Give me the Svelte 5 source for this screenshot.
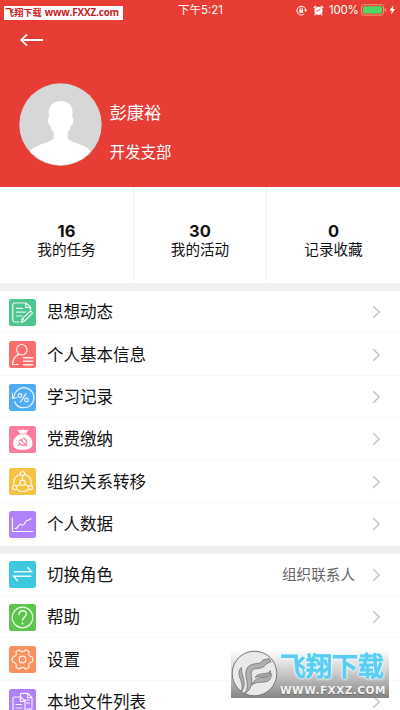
<script lang="ts">
  type Item = { icon: string; color: string; label: string; value?: string };

  const stats = [
    { count: 16, label: "我的任务" },
    { count: 30, label: "我的活动" },
    { count: 0, label: "记录收藏" },
  ];

  const groups: Item[][] = [
    [
      { icon: "note", color: "#4dc591", label: "思想动态" },
      { icon: "profile", color: "#fb6d6c", label: "个人基本信息" },
      { icon: "study", color: "#4fabf2", label: "学习记录" },
      { icon: "fee", color: "#fb7c9c", label: "党费缴纳" },
      { icon: "transfer", color: "#f6c244", label: "组织关系转移" },
      { icon: "chart", color: "#b180fb", label: "个人数据" },
    ],
    [
      { icon: "switch", color: "#3cc8df", label: "切换角色", value: "组织联系人" },
      { icon: "help", color: "#5bc44a", label: "帮助" },
      { icon: "settings", color: "#fb925b", label: "设置" },
      { icon: "files", color: "#b180fb", label: "本地文件列表" },
    ],
  ];
</script>

<div class="screen">
  <header class="header">
    <div class="status">
      <div class="tag"><span class="tag-cn">飞翔下载</span><span class="tag-url">www.FXXZ.com</span></div>
      <span class="time">下午5:21</span>
      <div class="indicators">
        <svg class="lock" width="11" height="11" viewBox="0 0 11 11" fill="none" stroke="#fff" aria-hidden="true">
          <path d="M8.3 8.9A4.4 4.4 0 1 1 9.7 5.2" stroke-width="1" />
          <path d="M8.1 4.8h3L9.6 7z" fill="#fff" stroke="none" />
          <rect x="3.3" y="4.8" width="3.8" height="3" fill="#fff" stroke="none" />
          <path d="M4 5V4.1a1.2 1.2 0 0 1 2.4 0V5" stroke-width=".8" />
        </svg>
        <svg class="alarm" width="11" height="11" viewBox="0 0 11 11" fill="none" aria-hidden="true">
          <circle cx="5.5" cy="5.8" r="4.1" fill="#fff" />
          <path d="M.8 3.1 3 1M8 1l2.2 2.1M2.5 9.3l-.8.9M8.5 9.3l.8.9" stroke="#fff" stroke-width="1.4" />
          <path d="M7.3 3.8 5.4 6H3.7" stroke="#e93d34" stroke-width=".9" />
        </svg>
        <span class="percent">100%</span>
        <svg width="26" height="12" viewBox="0 0 26 12" aria-hidden="true">
          <rect x=".5" y=".7" width="22" height="10.4" rx="2" fill="none" stroke="#f39b78" />
          <rect x="2" y="2.2" width="19" height="7.4" rx="1" fill="#4fd964" />
          <path d="M23.7 4.1q1.4.2 1.4 1.8t-1.4 1.8z" fill="#f39b78" />
        </svg>
        <svg width="7" height="10" viewBox="0 0 7 10" aria-hidden="true"><path d="M4.4.4.4 5.6h2.4L2 9.5l4.3-5.4H3.9z" fill="#fff" /></svg>
      </div>
    </div>
    <svg class="back" width="24" height="14" viewBox="0 0 24 14" fill="none" stroke="#fff" stroke-width="1.8" aria-hidden="true"><path d="M7 1.3 1.3 7 7 12.7M1.5 7H23" /></svg>
    <div class="user">
      <svg class="avatar" width="83" height="83" viewBox="0 0 83 83" aria-hidden="true">
        <defs><clipPath id="face"><circle cx="41.5" cy="41.5" r="40.7" /></clipPath></defs>
        <circle cx="41.5" cy="41.5" r="41.2" fill="#d7d7d7" />
        <path clip-path="url(#face)" fill="#fff" d="M42 18c7.6 0 11.8 5 11.6 12.5l-.3 4.2c1.6.2 1.2 3.6.4 5.7-.5 1.3-1 1.9-1.7 1.9-.5 3-1.8 5.3-3.3 7.1v5.2c0 2.3 3.2 3.6 7.5 5.2C64 62.5 68 64 71.5 68V83H11V68c4-4 8-5.7 15.500-8.200 4.800-1.600 8.200-3 8.200-5.300v-5.100c-1.700-1.800-2.900-4-3.400-7.100-.7 0-1.300-.6-1.700-1.900-.8-2.200-1.200-5.500.3-5.700l-.3-4.200C29.400 23 34 18 42 18z" />
      </svg>
      <div class="who">
        <div class="name">彭康裕</div>
        <div class="branch">开发支部</div>
      </div>
    </div>
  </header>

  <section class="stats">
    {#each stats as stat}
      <div class="stat">
        <b>{stat.count}</b>
        <span>{stat.label}</span>
      </div>
    {/each}
  </section>

  {#each groups as group}
    <section class="group">
      {#each group as item}
        <div class="row">
          <svg class="icon" width="27" height="27" viewBox="0 0 27 27" fill="none" stroke="#fff" stroke-opacity=".88" stroke-width="1.2" stroke-linecap="round" stroke-linejoin="round" aria-hidden="true">
            <rect width="27" height="27" rx="2.5" fill={item.color} stroke="none" />
            {#if item.icon === "note"}
              <path d="M21.5 11V8.3L17 4H5.5Q3.800 4 3.800 5.700v15.600q0 1.700 1.700 1.700h4.700M16.700 4.200v4.300h4.600M7.300 9.400h6.300M7.300 13.200h9M7.300 17h5.500" />
              <path d="m12.500 23.400.7-3.700 7.800-7.200q1.700-.4 2.500 1.600L15.700 22zM13.500 19.900l2.400 2" />
            {:else if item.icon === "profile"}
              <circle cx="12.8" cy="8.7" r="5.2" />
              <path d="M9.800 13.400C5.500 15.500 3.600 18.500 3.500 23.500H9" />
              <path d="M14.500 16.700h9.300M14.500 20.200h9.300M14.500 23.700h9.300" stroke-width="1.4" />
            {:else if item.icon === "study"}
              <path d="M5.500 17.500C7 21.500 10 23.700 14.300 23.700A10 10 0 1 0 5.200 11.800L4 13.700" />
              <path d="M3.400 9.500v4.800l4.600-.8" />
              <circle cx="11" cy="11.500" r="1.800" /><circle cx="17.500" cy="16" r="1.800" />
              <path d="m17 9.700-5.500 8.300" />
            {:else if item.icon === "fee"}
              <path d="m8.500 3.600 3 .8L14 3.300l2.500 1.100 3-.8-2.500 4.500c4.300 2.300 6.500 5.600 6.500 9.300 0 4.400-3.300 6.300-9.800 6.300S4 21.800 4 17.400c0-3.700 2.500-7 6.800-9.300z" fill="#fff" stroke="none" />
              <path d="M10.300 8h7" stroke={item.color} stroke-width=".8" />
              <path d="m10 15 3-2.200M11.800 14l5.800 5.600M14.800 12.500c4 1.500 4 7-.3 7-2 0-3.200-.8-4.200-2.300M10.800 18l-1.600 1.500" stroke={item.color} stroke-width="1.4" />
            {:else if item.icon === "transfer"}
              <circle cx="13.5" cy="5.5" r="2.2" /><circle cx="5.6" cy="19.500" r="2.200" /><circle cx="21.400" cy="19.500" r="2.200" /><circle cx="13.500" cy="14.800" r="2.700" />
              <path d="M13.500 7.700v4.400M11.200 16.300l-3.700 2M15.800 16.300l3.700 2M10.700 6.500C6.700 8 4.500 11.700 4.800 16M16.300 6.500c4 1.500 6.200 5.200 5.900 9.500M8.500 21.900c3 2 7 2 10 0" />
            {:else if item.icon === "chart"}
              <path d="M3.400 7v13.500h20.200" />
              <path d="M5.800 17.500q2.500.2 3.700-2.800 1-2 3.300-.8 2 .7 3.400-2.400 1.200-2.700 3.400-2.300l2.400-1.700" />
            {:else if item.icon === "switch"}
              <path d="M4.800 10.800h17.600l-3.900-4.600M22.400 15.300H4.800l3.900 4.600" stroke-linecap="butt" stroke-linejoin="miter" stroke-width="1.5" />
            {:else if item.icon === "help"}
              <circle cx="13.5" cy="13.5" r="10.3" />
              <path d="M10 10.500c0-5.200 7.500-4.800 7.300-.4-.1 2.900-3.700 3.200-3.700 6.200" stroke-width="1.4" />
              <circle cx="13.5" cy="19.5" r=".5" fill="#fff" />
            {:else if item.icon === "settings"}
              <path d="M10.300 3.800c1.500 2.500 4.900 2.500 6.400 0l3.400 2c-1.300 2.500.3 5 3 5.200l1.100 2.500-1.100 2.500c-2.700.2-4.300 2.700-3 5.200l-3.400 2c-1.500-2.500-4.900-2.500-6.400 0l-3.400-2c1.300-2.500-.3-5-3-5.200l-1.100-2.500L3.900 11c2.700-.2 4.300-2.700 3-5.200z" />
              <circle cx="13.5" cy="13.5" r="3.3" />
            {:else}
              <path d="M11.500 8V5.500q0-1.200 1.200-1.200h6l4.300 4.200v10.400q0 1.200-1.200 1.200h-4M18.500 4.500v4.200h4.300M15.500 11h4.800M17.500 14h3" />
              <path d="M4 9.300q0-1.300 1.300-1.300h6.200l4.500 4.300v9.900q0 1.300-1.300 1.300H5.300Q4 23.500 4 22.200zM11.300 8.200v4.300h4.500M7 15.500h6M7 19h6" />
            {/if}
          </svg>
          <span class="label">{item.label}</span>
          {#if item.value}<span class="value">{item.value}</span>{/if}
          <svg class="chevron" width="9" height="14" viewBox="0 0 9 14" fill="none" stroke="#c4c4c6" stroke-width="1.5" aria-hidden="true"><path d="m1.200 1.200 6 5.800-6 5.800" /></svg>
        </div>
      {/each}
    </section>
  {/each}

  <div class="watermark">
    <svg class="seal" width="47" height="47" viewBox="0 0 47 47" aria-hidden="true">
      <circle cx="23.5" cy="23.5" r="22.3" fill="#e9e9e9" stroke="#777" />
      <g fill="#b0b0b0" stroke="#777" stroke-width=".9" stroke-linejoin="round">
        <path d="M10 42C12 37 11 33 9.300 29 7.500 24 7.500 20 10.500 17.500c-.5 5 1.500 8 2.300 12 .8 5 .2 9-2.800 12.500z" />
        <path d="M13 44c3.500-4 4.200-9 2.500-15-1.500-7-.5-12.500 5.500-14.500 4.500-1.500 8.500 0 11-4.500l6-1.300 2 2.800-5 2.500c-2 3.500-6 4.300-9 4.500-5 .3-6.500 3-5.500 8 1 6 0 14-7.500 17.500z" />
        <path d="M21 35c2-5.500 6-7.500 11-7.500 4.500 0 6.500-1.500 8-4.500 1 6-2 8.500-7 9-5 .4-8 0-12 3z" />
        <path d="M24 27.500c2.500-3.500 5.500-3.500 9-3.800 3-.2 4.500-1 6.500-3-.3 4-2.500 5.300-6.500 5.500-3.500.1-6 0-9 1.300z" />
      </g>
    </svg>
    <div class="mark">
      <span class="mark-cn">飞翔下载</span>
      <span class="mark-url">WWW.FXXZ.COM</span>
    </div>
  </div>
</div>

<style>
  :global(body) { margin: 0; overflow: hidden; }
  .screen {
    position: relative;
    width: 400px;
    height: 710px;
    overflow: hidden;
    background: #f0f0f0;
    color: #111;
    font-family: Inter, "Noto Sans CJK SC", sans-serif;
  }
  .header {
    height: 187px;
    box-sizing: border-box;
    background: #e83d34;
    color: #fff;
  }
  .status {
    display: grid;
    grid-template-columns: 178px 1fr auto;
    height: 20px;
    align-items: center;
    padding-right: 4px;
    font-size: 11.5px;
  }
  .tag {
    display: flex;
    align-items: center;
    gap: 3px;
    width: 119px;
    height: 14px;
    box-sizing: border-box;
    margin: 5px 0 0 4px;
    padding-left: 1px;
    background: #fff;
    color: #c51c24;
    font-weight: 700;
    line-height: 14px;
    white-space: nowrap;
  }
  .tag-cn { font-size: 9.2px; }
  .tag-url { font-family: "Open Sans", sans-serif; font-size: 9.8px; letter-spacing: -.1px; }
  .time { line-height: 20px; }
  .indicators { display: flex; align-items: center; }
  .alarm { margin: 0 5px 0 6px; }
  .percent { width: 29px; margin-right: 3px; letter-spacing: -.2px; }
  .indicators svg:last-child { margin-left: 2px; }
  .back { display: block; margin: 13px 0 0 20px; }
  .user { display: flex; margin: 36px 0 0 19px; }
  .who { margin-left: 7.5px; }
  .name { margin-top: 17px; font-size: 17.3px; line-height: 25px; }
  .branch { margin-top: 16px; font-size: 15.5px; line-height: 23px; }
  .stats {
    display: grid;
    grid-template-columns: 134px 133px 133px;
    height: 96px;
    margin-bottom: 8px;
    background: #fff;
  }
  .stat {
    display: flex;
    flex-direction: column;
    align-items: center;
    padding-top: 34px;
    border-right: 1px solid #f3f3f3;
  }
  .stat:last-child { border-right: 0; }
  .stat b { font-size: 16.5px; line-height: 20px; }
  .stat span { font-size: 14.6px; line-height: 19px; }
  .group { margin-bottom: 8px; background: #fff; }
  .row {
    display: flex;
    align-items: center;
    height: 42.43px;
    box-sizing: border-box;
    padding: 1px 19px 0 9.4px;
    border-bottom: 1px solid #f8f8f8;
  }
  .icon { flex: none; }
  .label { margin-left: 10.6px; font-size: 16.5px; line-height: 24px; }
  .value { margin-left: auto; color: #666; font-size: 14.6px; line-height: 22px; }
  .chevron { margin-left: auto; }
  .value + .chevron { margin-left: 17px; }
  .watermark {
    position: absolute;
    left: 231px;
    top: 650px;
    display: flex;
    width: 158px;
    height: 48px;
    background: linear-gradient(rgba(255, 255, 255, .6), rgba(195, 195, 195, .92) 50%, #858585);
  }
  .seal { flex: none; }
  .mark { display: flex; flex-direction: column; margin-left: 2px; }
  .mark-cn {
    height: 34px;
    color: #5bcdf2;
    font-size: 26px;
    font-weight: 500;
    line-height: 33px;
    white-space: nowrap;
    -webkit-text-stroke: 1px #5bcdf2;
    filter: drop-shadow(0 0 1px #e8f9ff) drop-shadow(0 0 1px #e8f9ff);
  }
  .mark-url {
    color: #f4f4f4;
    font-family: "DejaVu Sans", sans-serif;
    font-size: 10.5px;
    font-weight: 700;
    line-height: 12px;
    letter-spacing: .5px;
    text-shadow: 0 1px 1px #666;
  }
</style>
